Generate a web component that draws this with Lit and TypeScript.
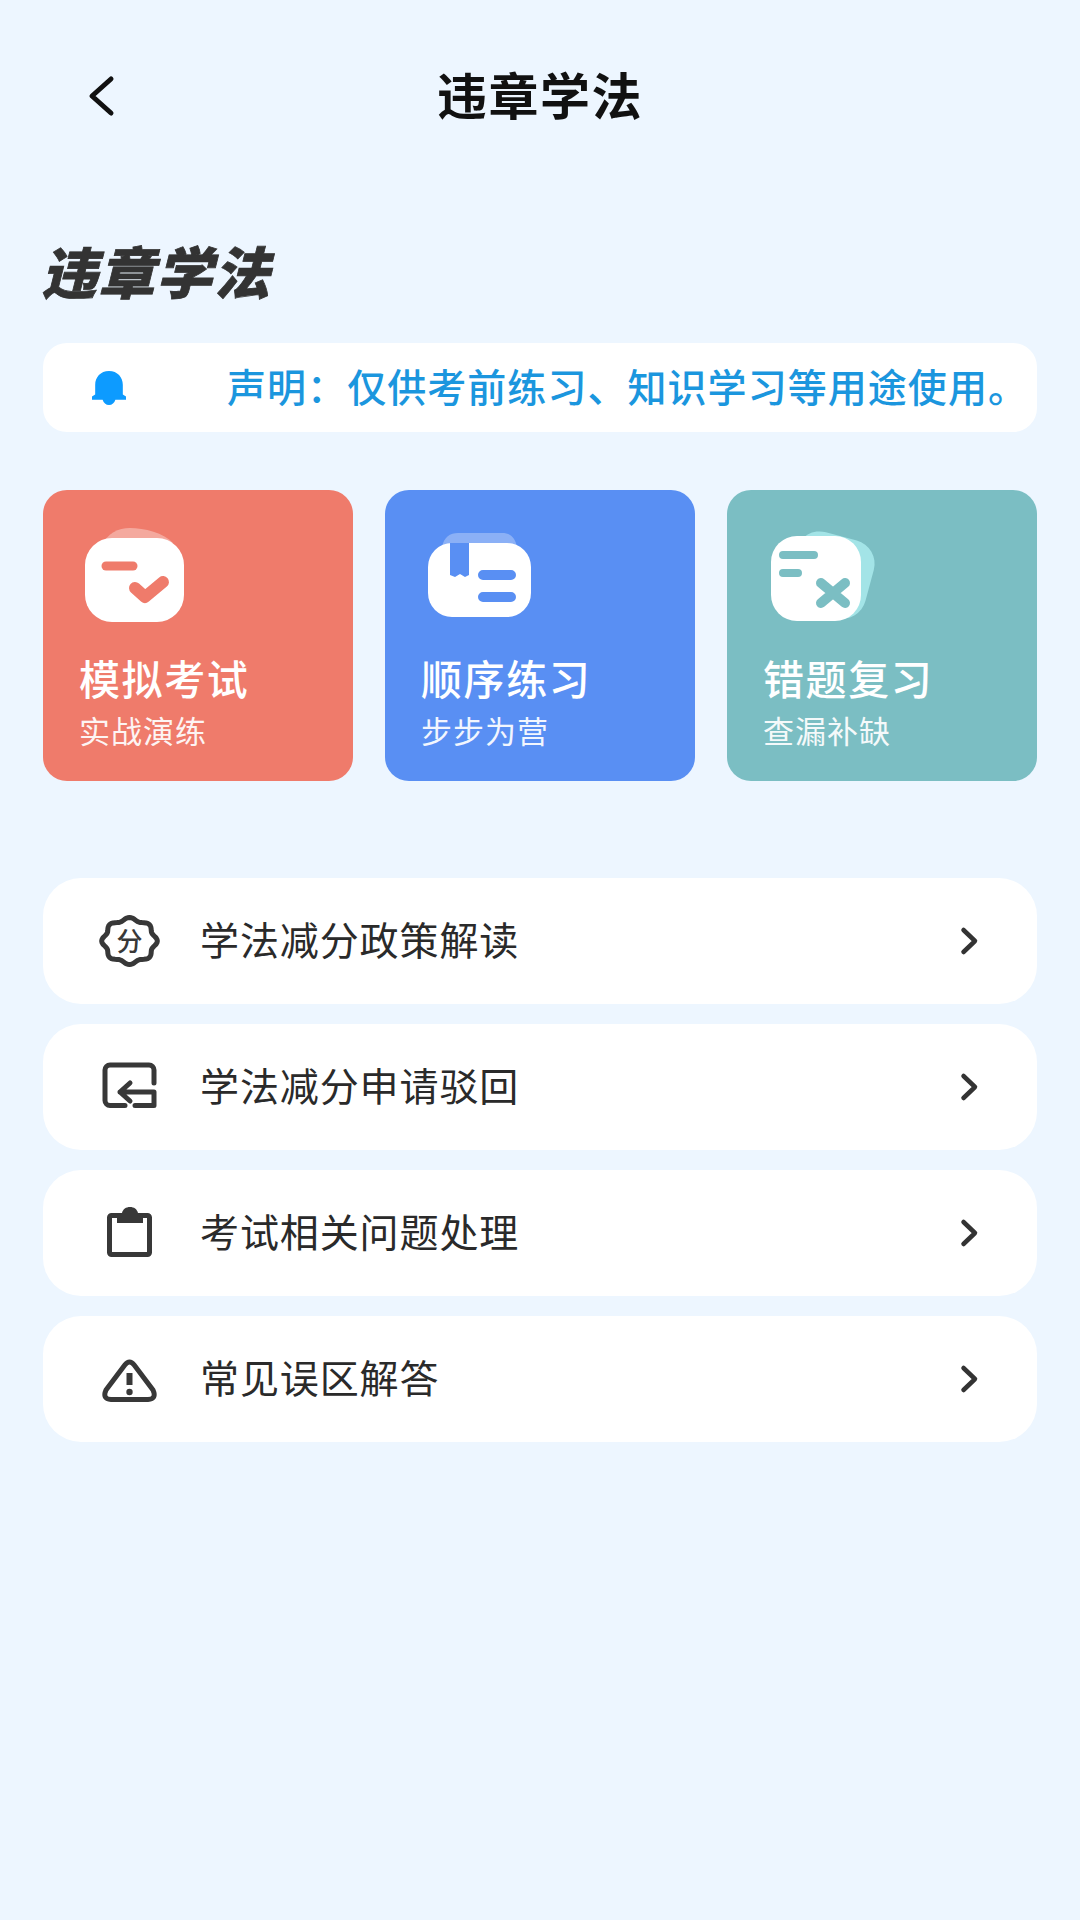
import { LitElement, html, css, svg } from "lit";
import { customElement } from "lit/decorators.js";

function flower() {
  const pts: string[] = [];
  for (let i = 0; i < 96; i++) {
    const t = (i / 96) * Math.PI * 2;
    const k = 1 + 0.07 * Math.cos(8 * (t + Math.PI / 2));
    pts.push(`${(40.5 + 26 * k * Math.cos(t)).toFixed(2)},${(40 + 22 * k * Math.sin(t)).toFixed(2)}`);
  }
  return pts.join(" ");
}

const chevron = html`<svg class="chev" viewBox="0 0 30 40"><path d="M8.5 9 L20 20 L8.5 31" /></svg>`;

const rows = [
  {
    t: "学法减分政策解读",
    i: svg`<polygon points=${flower()} class="ln" /><text x="40.5" y="50" class="fen">分</text>`,
  },
  {
    t: "学法减分申请驳回",
    i: svg`<path class="ln" d="M36 58.5H21a5 5 0 0 1-5-5V23a5 5 0 0 1 5-5H60a5 5 0 0 1 5 5V36" /><path class="ln" d="M65 45V58.5H46M65 45H31M41 36L31 45L41 54" />`,
  },
  {
    t: "考试相关问题处理",
    i: svg`<rect class="ln sharp" x="20.5" y="22.5" width="40" height="39" rx="2" /><path class="fl" d="M28 30V24Q28 21 33 20C34 16 37 14 41 14C45 14 48 16 49 20Q54 21 54 24V30Z" />`,
  },
  {
    t: "常见误区解答",
    i: svg`<path class="ln" d="M35.8 26Q40.5 20 45.2 26L64 51Q68 60 59 60.5H22Q13 60 17 51Z" /><path class="ln ex" d="M40.5 34V46" /><circle class="fl" cx="40.5" cy="53" r="3.2" />`,
  },
];

@customElement("app-root")
export class AppRoot extends LitElement {
  static styles = css`
    :host {
      display: block;
      width: 1080px;
      min-height: 1920px;
      background: #edf6ff;
      font-family: "Noto Sans CJK SC", "Noto Sans", sans-serif;
      color: #222;
    }
    .bar {
      position: relative;
      height: 190px;
      display: flex;
      align-items: center;
      justify-content: center;
    }
    .bar h1 {
      margin: 0;
      padding-bottom: 5px;
      font-size: 50px;
      letter-spacing: 1.5px;
      font-weight: 700;
      line-height: 60px;
      color: #111;
    }
    .back {
      position: absolute;
      left: 81px;
      top: 70px;
      width: 40px;
      height: 50px;
      fill: none;
      stroke: #111;
      stroke-width: 5;
      stroke-linecap: round;
      stroke-linejoin: round;
    }
    .main {
      padding: 0 43px;
    }
    .heading {
      margin: 55px 0 0 -2px;
      height: 50px;
      line-height: 50px;
      font-size: 56px;
      font-weight: 900;
      font-style: italic;
      letter-spacing: 1.5px;
      -webkit-text-stroke: 0.8px #333;
      color: #333;
    }
    .notice {
      margin-top: 48px;
      height: 89px;
      background: #fff;
      border-radius: 24px;
      display: flex;
      align-items: center;
      padding-left: 49px;
      gap: 101px;
      white-space: nowrap;
      font-size: 39px;
      letter-spacing: 1.05px;
      font-weight: 500;
      color: #1b96de;
    }
    .notice div { padding-bottom: 5px; }
    .notice svg {
      width: 34px;
      height: 34px;
      fill: #0d9bff;
      flex: none;
    }
    .cards {
      margin-top: 58px;
      display: grid;
      grid-template-columns: repeat(3, 310px);
      gap: 32px;
    }
    .card {
      height: 291px;
      box-sizing: border-box;
      border-radius: 24px;
      padding: 35px 36px 0;
      color: #fff;
      overflow: hidden;
    }
    .card.r { background: #ef7b6b; --c: #ef7b6b; }
    .card.b { background: #598ff3; --c: #598ff3; }
    .card.t { background: #7bbec3; --c: #7bbec3; }
    .card svg {
      display: block;
      width: 130px;
      height: 105px;
      margin-left: 1px;
      overflow: visible;
    }
    .card .w { fill: #fff; }
    .card .s {
      fill: none;
      stroke: var(--c);
      stroke-linecap: round;
      stroke-linejoin: round;
    }
    .card .f { fill: var(--c); }
    .ct {
      margin-top: 22px;
      font-size: 41px;
      line-height: 50px;
      font-weight: 500;
      letter-spacing: 1.6px;
    }
    .cs {
      margin-top: 8px;
      font-size: 31px;
      line-height: 40px;
      letter-spacing: 1px;
      opacity: 0.92;
    }
    .list {
      margin-top: 97px;
      display: flex;
      flex-direction: column;
      gap: 20px;
    }
    .row {
      height: 126px;
      background: #fff;
      border-radius: 38px;
      display: flex;
      align-items: center;
      padding: 0 46px;
      gap: 31px;
      font-size: 39px;
      letter-spacing: 0.9px;
      color: #2a2a2a;
    }
    .row .ic {
      width: 80px;
      height: 80px;
      flex: none;
    }
    .row .ln {
      fill: none;
      stroke: #383838;
      stroke-width: 5;
      stroke-linejoin: round;
      stroke-linecap: round;
    }
    .row .ex { stroke-width: 6; stroke-linecap: butt; }
    .row .fl { fill: #383838; }
    .row .fen {
      font-size: 26px;
      font-weight: 500;
      text-anchor: middle;
      fill: #383838;
      letter-spacing: 0;
    }
    .row span { flex: 1; padding-bottom: 7px; }
    .chev {
      width: 30px;
      height: 40px;
      flex: none;
      fill: none;
      stroke: #333;
      stroke-width: 4.5;
      stroke-linecap: round;
      stroke-linejoin: round;
      margin-right: 6px;
    }
  `;

  render() {
    return html`
      <div class="bar">
        <svg class="back" viewBox="0 0 40 50"><path d="M30 9 L11 26 L30 43" /></svg>
        <h1>违章学法</h1>
      </div>
      <div class="main">
        <h2 class="heading">违章学法</h2>
        <div class="notice">
          <svg viewBox="0 0 32 32"><path d="M16 0C8 0 3 6 3 13V22L0 24V27H10C11 30 13 32 16 32C19 32 21 30 22 27H32V24L29 22V13C29 6 24 0 16 0Z" /></svg>
          <div>声明：仅供考前练习、知识学习等用途使用。</div>
        </div>
        <div class="cards">
          <div class="card r">
            <svg viewBox="0 0 130 105">
              <path d="M20 22C28 8 38 3 50 3C64 3 84 8 93 18Z" fill="#fff" fill-opacity=".35" />
              <rect class="w" x="5" y="13" width="99" height="84" rx="27" />
              <path class="s" stroke-width="9" d="M26 41H53" />
              <path class="s" stroke-width="12" d="M55 63L65 72L83 57" />
            </svg>
            <div class="ct">模拟考试</div>
            <div class="cs">实战演练</div>
          </div>
          <div class="card b">
            <svg viewBox="0 0 130 105">
              <path d="M20 22C22 12 28 8 36 8H80C88 8 93 12 95 22Z" fill="#fff" fill-opacity=".3" />
              <rect class="w" x="6" y="18" width="103" height="74" rx="24" />
              <path class="f" d="M28 18H47V50L43 52L38 49L33 52L28 50Z" />
              <path class="s" stroke-width="10" d="M61 50H89M61 72H89" />
            </svg>
            <div class="ct">顺序练习</div>
            <div class="cs">步步为营</div>
          </div>
          <div class="card t">
            <svg viewBox="0 0 130 105">
              <rect x="27" y="10" width="80" height="80" rx="24" fill="#a3e4e7" transform="rotate(15 67 50)" />
              <rect class="w" x="7" y="11" width="90" height="85" rx="26" />
              <path class="s" stroke-width="8" d="M19 30H50M19 48H34" />
              <path class="s" stroke-width="10" d="M57 58L81 78M81 58L57 78" />
            </svg>
            <div class="ct">错题复习</div>
            <div class="cs">查漏补缺</div>
          </div>
        </div>
        <div class="list">
          ${rows.map(
            (r) => html`<div class="row">
              <svg class="ic" viewBox="0 0 80 80">${r.i}</svg>
              <span>${r.t}</span>
              ${chevron}
            </div>`
          )}
        </div>
      </div>
    `;
  }
}
